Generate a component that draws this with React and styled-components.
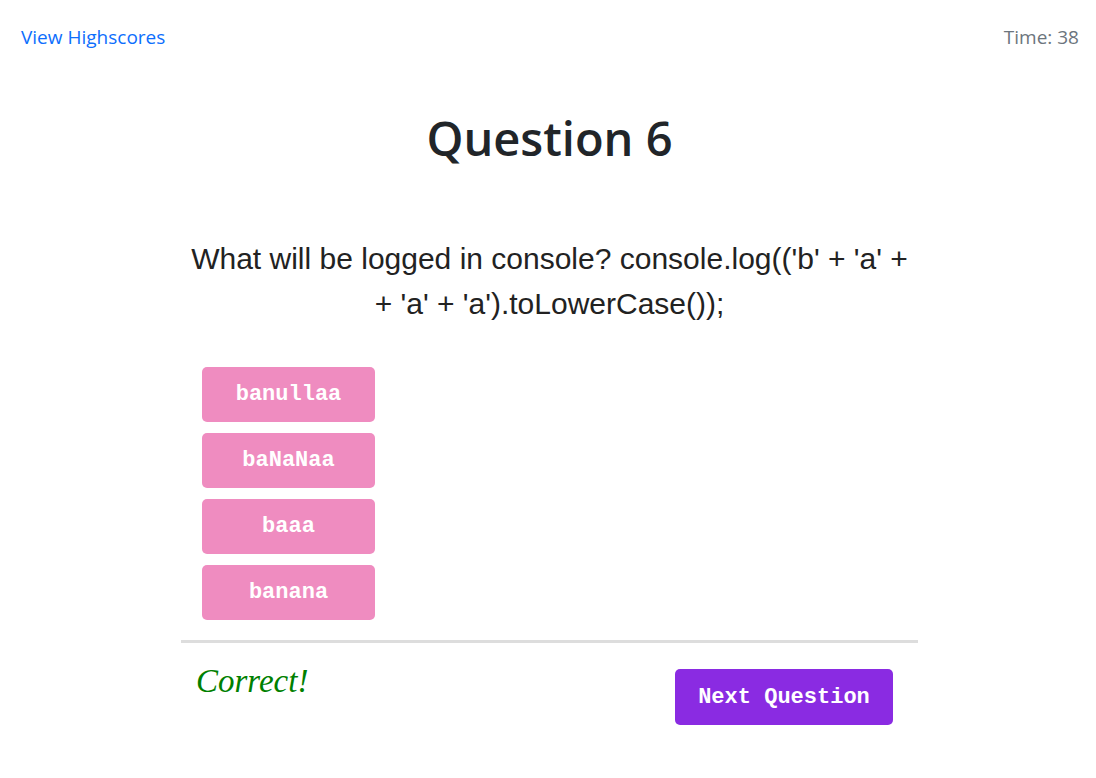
import React from 'react';
import styled, { createGlobalStyle } from 'styled-components';

const GlobalStyle = createGlobalStyle`
  body {
    margin: 0;
    background: #fff;
    font-family: "Open Sans", "Noto Sans", sans-serif;
    color: #212529;
  }
`;

const Header = styled.header`
  display: flex;
  justify-content: space-between;
  align-items: center;
  padding: 24px 17px 0 21px;
  font-size: 19px;
  line-height: 27px;
`;

const HighscoreLink = styled.a`
  color: #0d6efd;
  text-decoration: none;
  cursor: pointer;
`;

const Timer = styled.span`
  color: #6c757d;
`;

const Main = styled.main`
  width: 737px;
  margin-left: calc(50% - 367px);
`;

const Title = styled.h1`
  margin: 57px 0 0;
  text-align: center;
  font-size: 47px;
  font-weight: 600;
  line-height: 60px;
`;

const QuestionText = styled.p`
  margin: 68px 0 0;
  padding: 0 8px;
  text-align: center;
  font-family: "Liberation Sans", Arial, sans-serif;
  font-size: 30px;
  line-height: 45px;
  color: #222;
`;

const Choices = styled.div`
  display: flex;
  flex-direction: column;
  align-items: flex-start;
  gap: 11px;
  margin-top: 41px;
  padding-left: 21px;
`;

const ChoiceButton = styled.button`
  width: 173px;
  height: 55px;
  border: none;
  border-radius: 5px;
  background: #ef8cc0;
  color: #fff;
  font-family: "Liberation Mono", "Courier New", monospace;
  font-weight: bold;
  font-size: 22px;
  cursor: pointer;
`;

const Divider = styled.hr`
  margin: 20px 0 0;
  border: none;
  border-top: 3px solid #ddd;
`;

const Footer = styled.div`
  display: flex;
  justify-content: space-between;
  align-items: flex-start;
  padding: 0 25px 0 15px;
`;

const Feedback = styled.p`
  margin: 20px 0 0;
  font-family: "Liberation Serif", "Times New Roman", serif;
  font-style: italic;
  font-size: 33px;
  color: #008000;
`;

const NextButton = styled.button`
  margin-top: 26px;
  width: 218px;
  height: 56px;
  border: none;
  border-radius: 5px;
  background: #8a2be2;
  color: #fff;
  font-family: "Liberation Mono", "Courier New", monospace;
  font-weight: bold;
  font-size: 22px;
  cursor: pointer;
`;

const choices = ['banullaa', 'baNaNaa', 'baaa', 'banana'];

export default function App() {
  return (
    <>
      <GlobalStyle />
      <Header>
        <HighscoreLink>View Highscores</HighscoreLink>
        <Timer>Time: 38</Timer>
      </Header>
      <Main>
        <Title>Question 6</Title>
        <QuestionText>
          What will be logged in console? console.log(('b' + 'a' + + 'a' + 'a').toLowerCase());
        </QuestionText>
        <Choices>
          {choices.map((c) => (
            <ChoiceButton key={c}>{c}</ChoiceButton>
          ))}
        </Choices>
        <Divider />
        <Footer>
          <Feedback>Correct!</Feedback>
          <NextButton>Next Question</NextButton>
        </Footer>
      </Main>
    </>
  );
}
